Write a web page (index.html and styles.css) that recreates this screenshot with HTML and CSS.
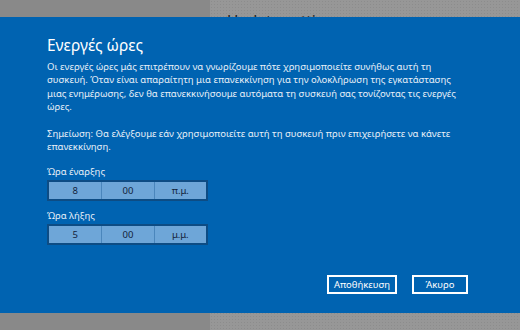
FILE: index.html
```html
<!DOCTYPE html>
<html lang="el">
<head>
    <meta charset="UTF-8">
    <meta name="viewport" content="width=device-width, initial-scale=1.0">
    <title>Ενεργές ώρες</title>
    <link rel="stylesheet" href="styles.css">
</head>
<body>
    <div class="backdrop">
        <div class="backdrop-nav"></div>
        <div class="backdrop-main">
            <h2 class="backdrop-title">Update settings</h2>
        </div>
    </div>

    <section class="dialog">
        <h1 class="dialog-title">Ενεργές ώρες</h1>
        <p class="dialog-text">Οι ενεργές ώρες μάς επιτρέπουν να γνωρίζουμε πότε χρησιμοποιείτε συνήθως αυτή τη συσκευή. Όταν είναι απαραίτητη μια επανεκκίνηση για την ολοκλήρωση της εγκατάστασης μιας ενημέρωσης, δεν θα επανεκκινήσουμε αυτόματα τη συσκευή σας τονίζοντας τις ενεργές ώρες.</p>
        <p class="dialog-text dialog-note">Σημείωση: Θα ελέγξουμε εάν χρησιμοποιείτε αυτή τη συσκευή πριν επιχειρήσετε να κάνετε επανεκκίνηση.</p>

        <div class="time-field time-start">
            <label class="time-label">Ώρα έναρξης</label>
            <div class="time-picker">
                <span>8</span>
                <span>00</span>
                <span>π.μ.</span>
            </div>
        </div>

        <div class="time-field">
            <label class="time-label">Ώρα λήξης</label>
            <div class="time-picker">
                <span>5</span>
                <span>00</span>
                <span>μ.μ.</span>
            </div>
        </div>

        <div class="dialog-actions">
            <button class="btn btn-save">Αποθήκευση</button>
            <button class="btn btn-cancel">Άκυρο</button>
        </div>
    </section>
</body>
</html>
```

FILE: styles.css
```css
html {
  box-sizing: border-box;
  font-family: "Noto Sans", "Open Sans", sans-serif;
  font-size: 16px;
}

*,
*:before,
*:after {
  box-sizing: inherit;
}

body {
  margin: 0;
  width: 520px;
  height: 330px;
  overflow: hidden;
  position: relative;
}

.backdrop {
  display: grid;
  grid-template-columns: 210px 1fr;
  height: 330px;
}

.backdrop-nav {
  background-color: #898989;
}

.backdrop-main {
  background-color: #979797;
  background-image: radial-gradient(#8c8c8c 0.6px, transparent 0.8px);
  background-size: 3px 3px;
  padding-left: 17px;
}

.backdrop-title {
  margin: 10px 0 0;
  font-size: 15.5px;
  font-weight: normal;
  color: #1e1e1e;
}

.dialog {
  position: absolute;
  top: 17px;
  left: 0;
  right: 0;
  height: 296px;
  background-color: #0063b1;
  color: #fff;
  padding: 16px 0 0 47px;
  display: flex;
  flex-direction: column;
}

.dialog-title {
  margin: 0;
  font-size: 15.5px;
  font-weight: normal;
  line-height: 24px;
}

.dialog-text {
  margin: 3px 0 0;
  width: 424px;
  font-size: 9.5px;
  line-height: 13.3px;
  color: #e8f0f8;
}

.dialog-note {
  margin-top: 14px;
}

.time-field {
  display: flex;
  flex-direction: column;
  margin-top: 8px;
}

.time-start {
  margin-top: 11px;
}

.time-label {
  font-size: 9.5px;
  line-height: 14px;
  color: #e8f0f8;
}

.time-picker {
  display: grid;
  grid-template-columns: repeat(3, 1fr);
  width: 161px;
  height: 21px;
  margin-top: 1px;
  border: 2px solid #0d4c84;
  background-color: #6ea6d8;
}

.time-picker span {
  display: flex;
  align-items: center;
  justify-content: center;
  font-size: 9.5px;
  color: #12223a;
  border-left: 1px solid #4a86bc;
}

.time-picker span:first-child {
  border-left: none;
}

.dialog-actions {
  display: flex;
  gap: 15px;
  margin-top: auto;
  margin-bottom: 19px;
  padding-left: 280px;
}

.btn {
  height: 19px;
  padding: 0;
  border: 2px solid #fff;
  background-color: #0063b1;
  color: #fff;
  font-family: inherit;
  font-size: 9.5px;
  cursor: pointer;
}

.btn-save {
  width: 70px;
}

.btn-cancel {
  width: 56px;
}
```
